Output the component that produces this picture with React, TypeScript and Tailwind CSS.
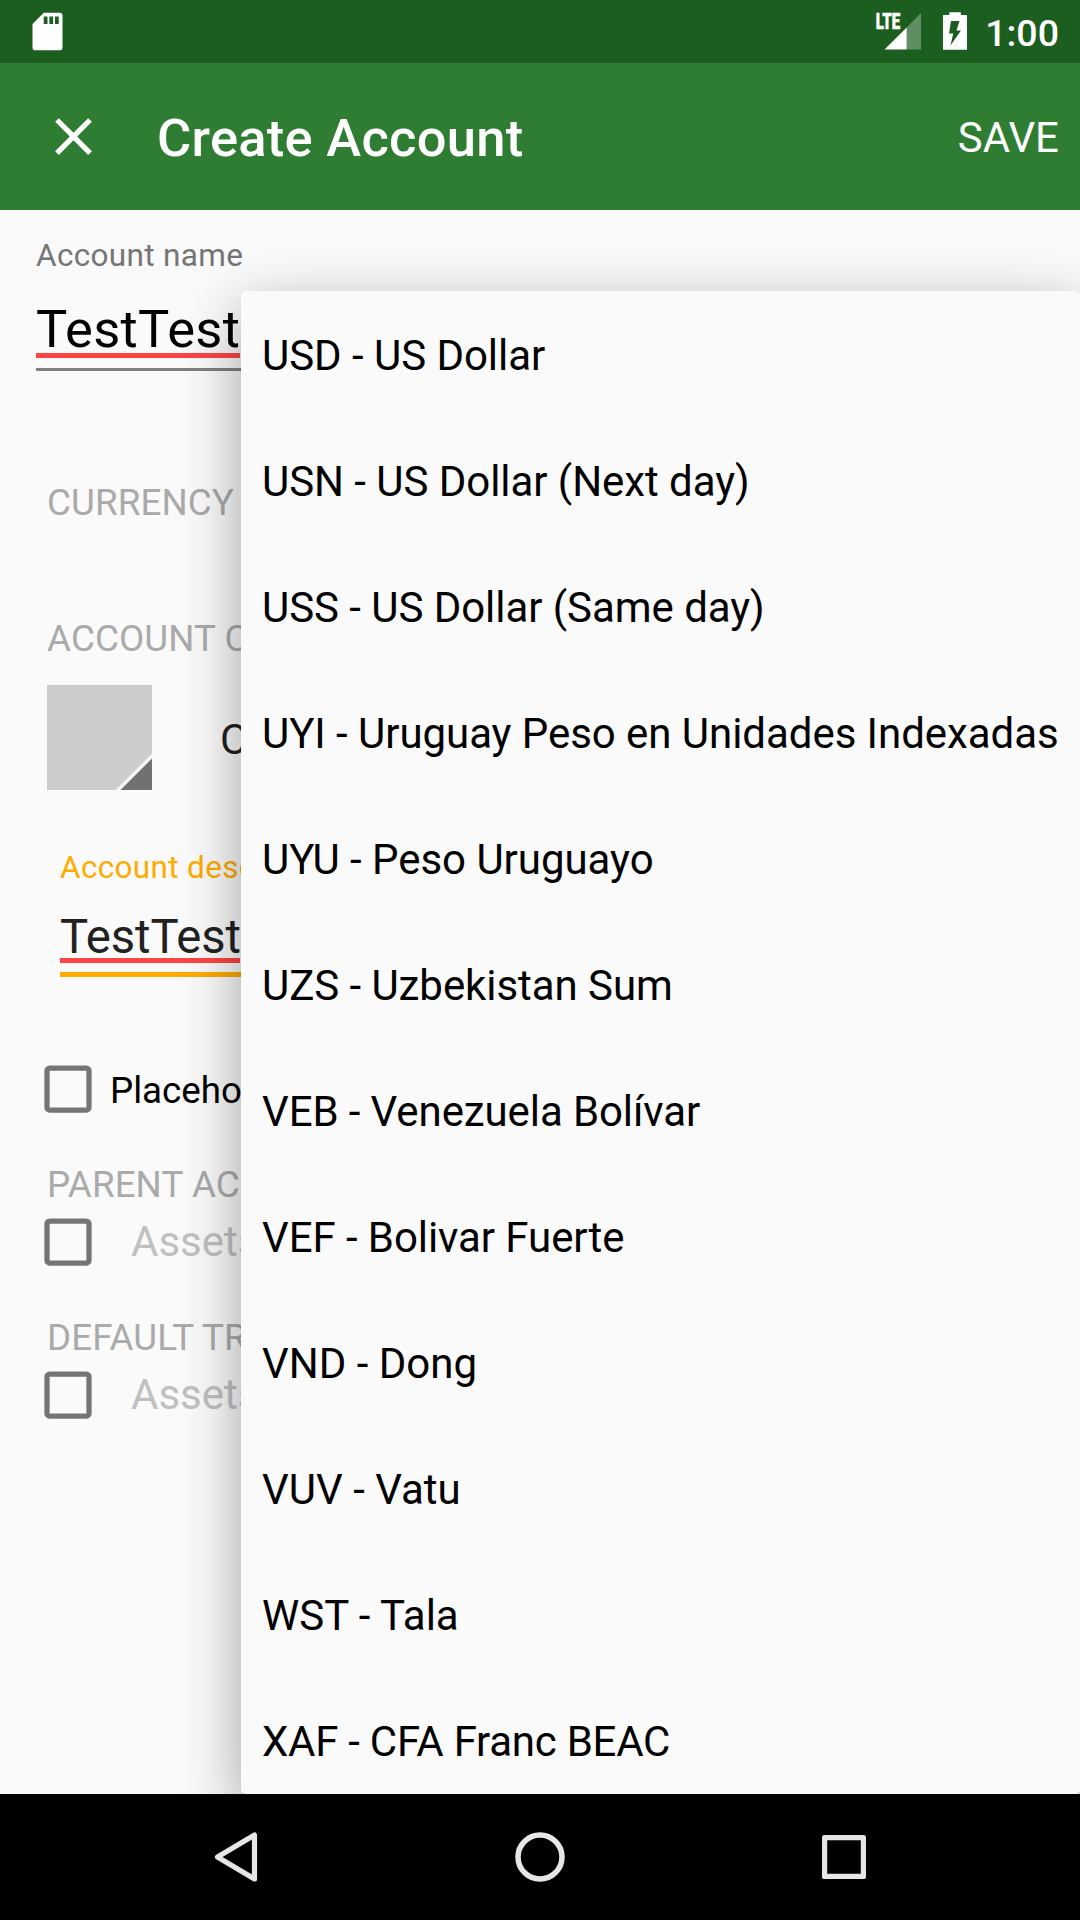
import React from "react";

const currencies = [
  { name: "USD - US Dollar", tracking: "tracking-[-0.04px]" },
  { name: "USN - US Dollar (Next day)", tracking: "tracking-[-0.05px]" },
  { name: "USS - US Dollar (Same day)", tracking: "tracking-[-0.05px]" },
  { name: "UYI - Uruguay Peso en Unidades Indexadas", tracking: "tracking-[-0.05px]" },
  { name: "UYU - Peso Uruguayo", tracking: "tracking-[-0.03px]" },
  { name: "UZS - Uzbekistan Sum", tracking: "tracking-[-0.06px]" },
  { name: "VEB - Venezuela Bolívar", tracking: "tracking-[-0.1px]" },
  { name: "VEF - Bolivar Fuerte", tracking: "tracking-[-0.07px]" },
  { name: "VND - Dong", tracking: "tracking-[0px]" },
  { name: "VUV - Vatu", tracking: "tracking-[0px]" },
  { name: "WST - Tala", tracking: "tracking-[0px]" },
  { name: "XAF - CFA Franc BEAC", tracking: "tracking-[-0.26px]" },
];

function StatusBar() {
  return (
    <div className="flex h-[63px] shrink-0 items-center bg-[#1b5e20] pl-[25px] pr-[21px] text-white">
      <svg className="size-[45px]" viewBox="0 0 24 24" fill="currentColor">
        <path d="M18.6 2H10L4 8v12.6C4 21.4 4.6 22 5.4 22h13.2c.8 0 1.4-.6 1.4-1.4V3.4C20 2.600 19.400 2 18.600 2zM12 8h-2V4h2v4zm3 0h-2V4h2v4zm3 0h-2V4h2v4z" />
      </svg>
      <svg className="ml-auto h-[63px] w-[48px]" viewBox="0 0 48 63" fill="none">
        <path d="M33.700 27.500L48 13v36.500H33.700z" fill="#fff" fillOpacity=".3" />
        <path d="M11.500 49.500L33.700 27.500v22z" fill="#fff" />
        <text
          x="2.700"
          y="28.900"
          fontFamily="Roboto, sans-serif"
          fontSize="21.400"
          fontWeight="900"
          fill="#fff"
          stroke="#fff"
          strokeWidth="0.500"
          textLength="24.600"
          lengthAdjust="spacingAndGlyphs"
        >
          LTE
        </text>
      </svg>
      <svg className="ml-[22px] h-[63px] w-[24px]" viewBox="0 0 24 63" fill="currentColor">
        <path
          fillRule="evenodd"
          d="M6.300 12.300h11.500V15H24v34.800H0V15h6.300zM8 21L6 33.500h4.200L7.500 45.500 18 30.500h-4.500L16.500 21z"
        />
      </svg>
      <span className="ml-[18px] mt-[2px] text-[37.5px] font-medium leading-[44px]">1:00</span>
    </div>
  );
}

function Toolbar() {
  return (
    <div className="flex h-[147px] shrink-0 items-center bg-[#2e7d32] pl-[42px] pr-[21px] text-white">
      <svg className="size-[63px]" viewBox="0 0 24 24" fill="currentColor">
        <path d="M19 6.410L17.590 5 12 10.590 6.410 5 5 6.410 10.590 12 5 17.590 6.410 19 12 13.410 17.590 19 19 17.590 13.410 12z" />
      </svg>
      <h1 className="ml-[52px] mt-[3px] text-[52.5px] font-medium leading-[60px] tracking-[0.27px]">Create Account</h1>
      <button className="ml-auto mt-[2px] text-[42px] leading-[50px]">SAVE</button>
    </div>
  );
}

function SectionLabel({ children, className }: { children: React.ReactNode; className: string }) {
  return (
    <div className={`ml-[47px] h-[44px] text-[36.75px] leading-[46px] tracking-[0.1px] text-[#aaaaaa] ${className}`}>{children}</div>
  );
}

function Checkbox() {
  return (
    <svg className="size-[48px] shrink-0" viewBox="0 0 48 48" fill="none">
      <rect x="3" y="3" width="42" height="42" rx="2.600" stroke="#757575" strokeWidth="5.250" />
    </svg>
  );
}

function AccountForm() {
  return (
    <div className="flex flex-col whitespace-nowrap">
      <div className="ml-[36px] mt-[26px] flex flex-col">
        <label className="h-[40px] text-[31.5px] leading-[40px] tracking-[0.34px] text-[#757575]">Account name</label>
        <span className="mt-[29px] h-[48px] text-[52.5px] leading-[48px] tracking-[0.3px] text-black">TestTest</span>
        <span className="h-[5px] w-[204px] bg-[#ff4444]" />
        <span className="mr-[36px] mt-[10px] h-[3px] bg-[#808080]" />
      </div>

      <SectionLabel className="mt-[109px]">CURRENCY</SectionLabel>
      <SectionLabel className="mt-[92px]">ACCOUNT COLOR</SectionLabel>

      <div className="ml-[47px] mt-[25px] flex h-[105px] items-center">
        <svg className="size-[105px] shrink-0" viewBox="0 0 105 105">
          <path d="M0 0h105v105H0z" fill="#cccccc" />
          <path d="M105 68.500V105H68.500z" fill="#f5f5f5" />
          <path d="M105 73.500V105H73.500z" fill="#717171" />
        </svg>
        <span className="ml-[68px] mt-[4px] text-[42px] leading-[50px] text-[#212121]">CASH</span>
      </div>

      <div className="ml-[60px] mt-[57px] flex flex-col">
        <label className="h-[40px] text-[31.5px] leading-[42px] tracking-[0.34px] text-[#ffab00]">Account description</label>
        <span className="mt-[27px] h-[44px] text-[47.25px] leading-[46px] tracking-[-0.1px] text-[#212121]">TestTest</span>
        <span className="h-[5px] w-[180px] bg-[#ff4444]" />
        <span className="mr-[36px] mt-[9px] h-[5px] bg-[#ffab00]" />
      </div>

      <div className="ml-[44px] mt-[88px] flex h-[48px] items-center">
        <Checkbox />
        <span className="ml-[18px] mt-[4px] text-[36.75px] leading-[44px] text-black">Placeholder account</span>
      </div>

      <SectionLabel className="mt-[49px]">PARENT ACCOUNT</SectionLabel>
      <div className="ml-[44px] mt-[12px] flex h-[48px] items-center">
        <Checkbox />
        <span className="mb-[1px] ml-[39px] text-[42px] leading-[47px] text-[#c0c0c0]">Assets</span>
      </div>

      <SectionLabel className="mt-[49px]">DEFAULT TRANSFER ACCOUNT</SectionLabel>
      <div className="ml-[44px] mt-[12px] flex h-[48px] items-center">
        <Checkbox />
        <span className="mb-[1px] ml-[39px] text-[42px] leading-[47px] text-[#c0c0c0]">Assets</span>
      </div>
    </div>
  );
}

function CurrencyMenu() {
  return (
    <ul className="absolute bottom-0 left-[241px] right-0 top-[81px] overflow-hidden rounded-[5px] bg-[#fafafa] shadow-[0_18px_60px_rgba(0,0,0,0.36)]">
      {currencies.map(({ name, tracking }) => (
        <li
          key={name}
          className={`flex h-[126px] items-center whitespace-nowrap px-[21px] pt-[4px] text-[42px] leading-[50px] text-black ${tracking}`}
        >
          {name}
        </li>
      ))}
    </ul>
  );
}

function NavigationBar() {
  return (
    <div className="grid h-[126px] shrink-0 grid-cols-3 place-items-center bg-black px-[84px]">
      <svg className="size-[60px]" viewBox="0 0 60 60" fill="none" stroke="#e6e6e6" strokeWidth="5.200" strokeLinejoin="round">
        <path d="M48.500 8v44L11.500 30z" />
      </svg>
      <svg className="size-[60px]" viewBox="0 0 60 60" fill="none" stroke="#e6e6e6" strokeWidth="5.500">
        <circle cx="30" cy="30" r="22" />
      </svg>
      <svg className="size-[60px]" viewBox="0 0 60 60" fill="none" stroke="#e6e6e6" strokeWidth="5.200" strokeLinejoin="round">
        <path d="M10.600 10.600h38.800v38.800H10.600z" />
      </svg>
    </div>
  );
}

export default function App() {
  return (
    <div className="flex h-[1920px] w-[1080px] flex-col overflow-hidden bg-[#fafafa] font-[Roboto,sans-serif]">
      <StatusBar />
      <Toolbar />
      <main className="relative flex-1 overflow-hidden">
        <AccountForm />
        <CurrencyMenu />
      </main>
      <NavigationBar />
    </div>
  );
}
